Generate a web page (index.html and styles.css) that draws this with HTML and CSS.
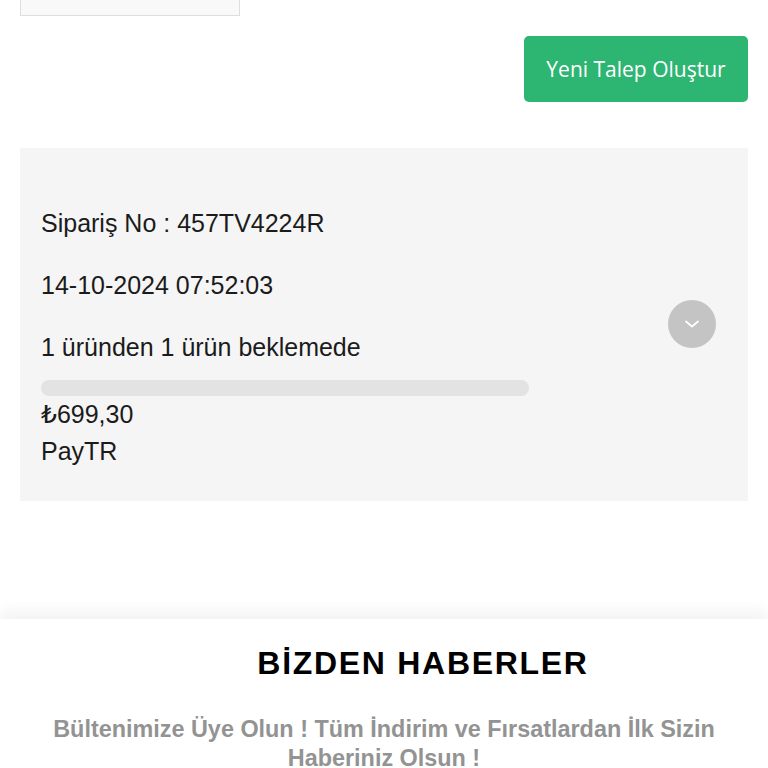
FILE: index.html
```html
<!DOCTYPE html>
<html lang="tr">
<head>
  <meta charset="UTF-8">
  <title>Siparişlerim</title>
  <link rel="stylesheet" href="styles.css">
</head>
<body>

  <div class="page">
    <div class="filter-box"></div>

    <div class="actions">
      <button class="btn-new">Yeni Talep Oluştur</button>
    </div>

    <div class="order-card">
      <div class="order-info">
        <p class="order-line">Sipariş No : 457TV4224R</p>
        <p class="order-line">14-10-2024 07:52:03</p>
        <p class="order-line">1 üründen 1 ürün beklemede</p>
        <div class="progress">
          <div class="progress-fill" style="width: 0%"></div>
        </div>
        <p class="order-meta">₺699,30</p>
        <p class="order-meta">PayTR</p>
      </div>
      <button class="toggle" aria-label="Detay">
        <svg width="16" height="10" viewBox="0 0 16 10">
          <path d="M2 2.5 L8 7.5 L14 2.5" fill="none" stroke="#fff" stroke-width="1.8" stroke-linecap="round" stroke-linejoin="round"/>
        </svg>
      </button>
    </div>
  </div>

  <footer class="newsletter">
    <h2 class="newsletter-title">BİZDEN HABERLER</h2>
    <p class="newsletter-text">Bültenimize Üye Olun ! Tüm İndirim ve Fırsatlardan İlk Sizin Haberiniz Olsun !</p>
  </footer>

</body>
</html>
```

FILE: styles.css
```css
body {
  margin: 0;
  background: #fff;
  font-family: 'Liberation Sans', Arial, 'DejaVu Sans', sans-serif;
  color: #1b1b1b;
  overflow: hidden;
}

.page {
  padding: 0 20px;
}

.filter-box {
  width: 218px;
  height: 40px;
  margin-top: -26px;
  background: #f9f9f9;
  border: 1px solid #dedede;
}

.actions {
  display: flex;
  justify-content: flex-end;
  margin-top: 20px;
}

.btn-new {
  width: 224px;
  height: 66px;
  padding: 0;
  background: #2db572;
  color: #fff;
  border: none;
  border-radius: 5px;
  font-family: 'Open Sans', Roboto, sans-serif;
  font-size: 21px;
  cursor: pointer;
}

.order-card {
  display: flex;
  justify-content: space-between;
  align-items: center;
  margin-top: 46px;
  padding: 30px 32px 31px 21px;
  background: #f5f5f5;
}

.order-info {
  width: 488px;
  padding-top: 27px;
}

.order-line,
.order-meta {
  margin: 0;
  font-size: 25px;
  line-height: 37px;
}

.order-line {
  margin-bottom: 25px;
}

.order-line:nth-child(3) {
  margin-bottom: 14px;
}

.progress {
  height: 16px;
  border-radius: 8px;
  background: #e3e3e3;
  overflow: hidden;
}

.progress-fill {
  height: 100%;
  background: #2db572;
}

.toggle {
  display: flex;
  align-items: center;
  justify-content: center;
  width: 48px;
  height: 48px;
  padding: 0;
  border: none;
  border-radius: 50%;
  background: #c4c4c4;
  cursor: pointer;
}

.newsletter {
  margin-top: 118px;
  padding: 24px 40px 40px;
  background: #fff;
  box-shadow: 0 -8px 14px rgba(0, 0, 0, 0.05);
  text-align: center;
}

.newsletter-title {
  margin: 0;
  padding-left: 78px;
  font-size: 32px;
  line-height: 40px;
  font-weight: bold;
  letter-spacing: 1.7px;
  color: #000;
}

.newsletter-text {
  margin: 32px 0 0;
  font-size: 23.4px;
  line-height: 29px;
  font-weight: bold;
  color: #939393;
}
```
